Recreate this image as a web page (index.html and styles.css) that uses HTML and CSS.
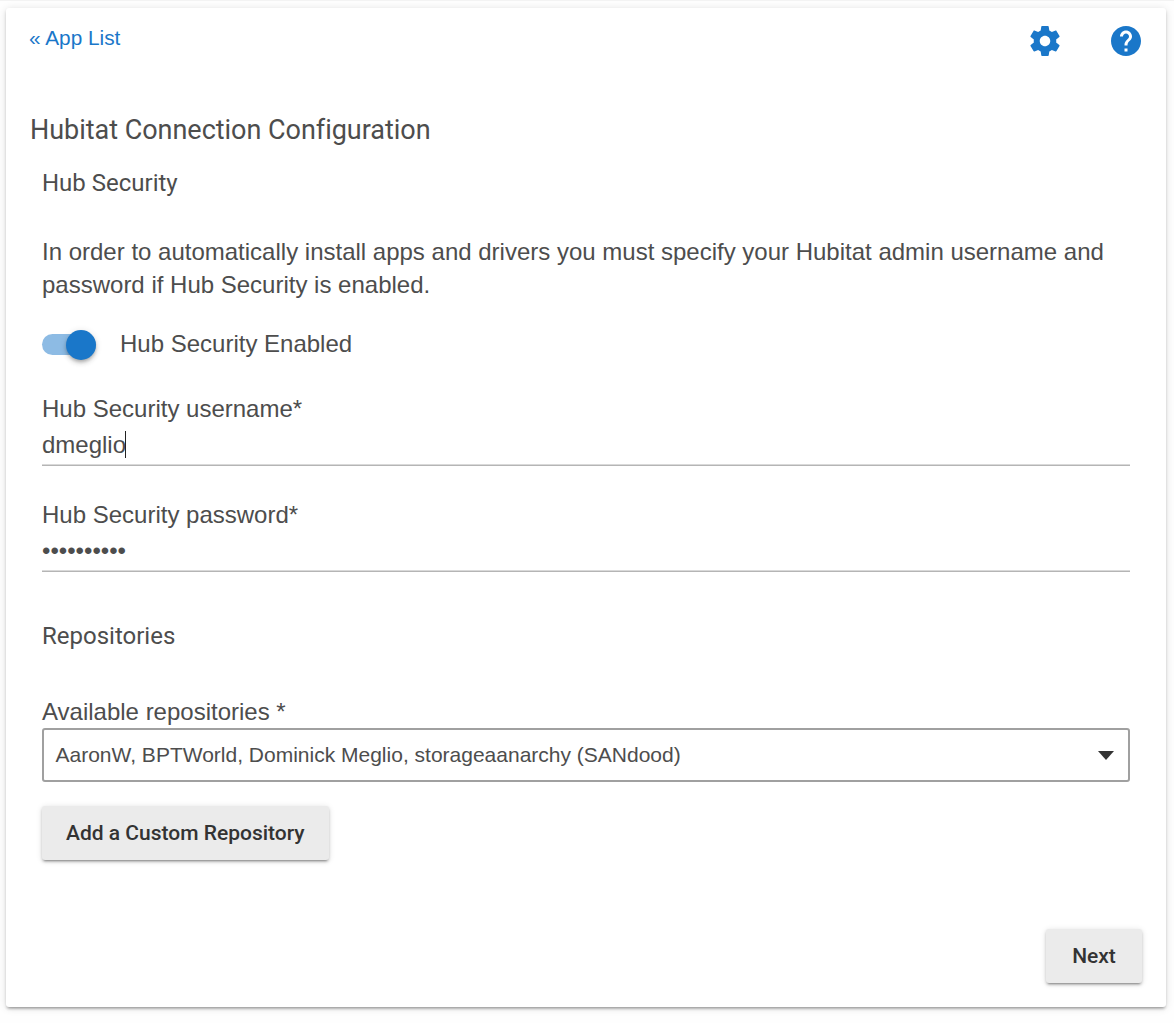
FILE: index.html
```html
<!DOCTYPE html>
<html lang="en">
<head>
<meta charset="utf-8">
<title>Hubitat Connection Configuration</title>
<link rel="stylesheet" href="styles.css">
</head>
<body>
<main class="card">
  <header class="topbar">
    <a class="back" href="#">« App List</a>
    <nav class="actions">
      <svg class="icon" viewBox="0 0 24 24" aria-label="Settings"><path d="M19.43 12.98c.04-.32.07-.64.07-.98s-.03-.66-.07-.98l2.11-1.65c.19-.15.24-.42.12-.64l-2-3.46c-.12-.22-.39-.3-.61-.22l-2.49 1c-.52-.4-1.08-.73-1.69-.98l-.38-2.65C14.46 2.18 14.25 2 14 2h-4c-.25 0-.46.18-.49.42l-.38 2.65c-.61.25-1.17.59-1.69.98l-2.49-1c-.23-.09-.49 0-.61.22l-2 3.46c-.13.22-.07.49.12.64l2.11 1.65c-.04.32-.07.65-.07.98s.03.66.07.98l-2.11 1.65c-.19.15-.24.42-.12.64l2 3.46c.12.22.39.3.61.22l2.49-1c.52.4 1.08.73 1.69.98l.38 2.65c.03.24.24.42.49.42h4c.25 0 .46-.18.49-.42l.38-2.65c.61-.25 1.17-.59 1.69-.98l2.49 1c.23.09.49 0 .61-.22l2-3.46c.12-.22.07-.49-.12-.64l-2.11-1.65zM12 15.5c-1.93 0-3.5-1.57-3.5-3.5s1.57-3.5 3.5-3.5 3.5 1.57 3.5 3.5-1.57 3.5-3.5 3.5z"/></svg>
      <svg class="icon" viewBox="0 0 24 24" aria-label="Help"><path d="M12 2C6.48 2 2 6.48 2 12s4.48 10 10 10 10-4.48 10-10S17.52 2 12 2zm1 17h-2v-2h2v2zm2.07-7.75l-.9.92C13.45 12.9 13 13.5 13 15h-2v-.5c0-1.1.45-2.1 1.17-2.83l1.24-1.26c.37-.36.59-.86.59-1.41 0-1.1-.9-2-2-2s-2 .9-2 2H8c0-2.21 1.79-4 4-4s4 1.79 4 4c0 .88-.36 1.68-.93 2.25z"/></svg>
    </nav>
  </header>
  <h1 class="title">Hubitat Connection Configuration</h1>
  <section class="section">
    <h2 class="subtitle">Hub Security</h2>
    <p class="text">In order to automatically install apps and drivers you must specify your Hubitat admin username and password if Hub Security is enabled.</p>
    <div class="toggle">
      <span class="track"><span class="thumb"></span></span>
      <span>Hub Security Enabled</span>
    </div>
    <div class="field">
      <div class="label">Hub Security username*</div>
      <div class="value"><span class="typed">dmeglio</span><span class="caret"></span></div>
    </div>
    <div class="field">
      <div class="label">Hub Security password*</div>
      <div class="value">••••••••••</div>
    </div>
    <h2 class="subtitle repos">Repositories</h2>
    <div class="label">Available repositories *</div>
    <div class="select">
      <span class="chosen">AaronW, BPTWorld, Dominick Meglio, storageaanarchy (SANdood)</span>
      <svg class="arrow" viewBox="0 0 16 9"><path d="M0 0h16L8 9z"/></svg>
    </div>
    <button class="button">Add a Custom Repository</button>
  </section>
  <footer class="footer"><button class="button">Next</button></footer>
</main>
</body>
</html>
```
FILE: styles.css
```css
* { box-sizing: border-box; }
body {
  margin: 0;
  height: 1023px;
  padding: 8px 8px 16px 6px;
  background: #fefefe;
  border-top: 1px solid #f3f3f3;
  color: #4d4d4d;
  font: 24px/33px "Liberation Sans", Arial, sans-serif;
  overflow: hidden;
}
.card {
  display: flex;
  flex-direction: column;
  height: 999px;
  margin-top: -1px;
  padding: 0 24px;
  background: #fff;
  border-radius: 3px;
  box-shadow: 0 3px 3px -2px rgba(0,0,0,.28), 0 2px 3px rgba(0,0,0,.14), 0 1px 8px rgba(0,0,0,.12);
}
.topbar {
  display: flex;
  justify-content: space-between;
  height: 103px;
  padding: 15px 0 0;
}
.back {
  height: 30px;
  margin-left: -1px;
  color: #1a77c9;
  font-size: 20.8px;
  line-height: 30px;
  text-decoration: none;
}
.actions { display: flex; gap: 45px; margin-right: -1.5px; }
.icon { width: 36px; height: 36px; fill: #1a77c9; }
.title {
  margin: 0;
  font: 400 27px/39px Roboto, sans-serif;
  letter-spacing: -.03px;
}
.section { padding: 0 12px; }
.subtitle {
  margin: 0;
  padding-top: 17px;
  font: 400 24px/33px Roboto, sans-serif;
}
.text { margin: 35px 0 0; }
.toggle {
  display: flex;
  align-items: center;
  gap: 24px;
  height: 33px;
  margin-top: 26px;
}
.track {
  display: flex;
  align-items: center;
  justify-content: flex-end;
  width: 54px;
  height: 21px;
  margin-top: 2px;
  border-radius: 11px;
  background: #8dbbe4;
}
.thumb {
  width: 30px;
  height: 30px;
  border-radius: 50%;
  background: #1a77c9;
  box-shadow: 0 4px 6px -2px rgba(0,0,0,.2), 0 2px 3px rgba(0,0,0,.14), 0 1px 7px rgba(0,0,0,.12);
}
.field { margin-top: 32px; }
.value {
  display: flex;
  align-items: center;
  height: 41px;
  padding-bottom: 1px;
  border-bottom: 1px solid #b5b5b5;
  box-shadow: inset 0 -1px #d9d9d9;
}
.caret { width: 1px; height: 27px; margin-left: -1px; background: #222; }
.repos { padding-top: 48px; margin-bottom: 42px; }
.select {
  display: flex;
  align-items: center;
  justify-content: space-between;
  height: 54px;
  padding: 0 14px 0 11.5px;
  border: 2px solid #a0a0a0;
  border-radius: 3px;
  font-size: 21px;
}
.chosen { padding-bottom: 2px; }
.arrow { width: 16px; height: 9px; fill: #333; }
.button {
  height: 54px;
  min-width: 96px;
  margin: 24px 0 0;
  padding: 0 24px;
  border: 0;
  border-radius: 3px;
  background: #ebebeb;
  color: #333;
  font: 500 21px/54px Roboto, sans-serif;
  box-shadow: 0 3px 2px -2px rgba(0,0,0,.28), 0 2px 3px rgba(0,0,0,.18), 0 1px 6px rgba(0,0,0,.12);
}
.footer {
  display: flex;
  justify-content: flex-end;
  margin: auto 0 24px;
}
```
